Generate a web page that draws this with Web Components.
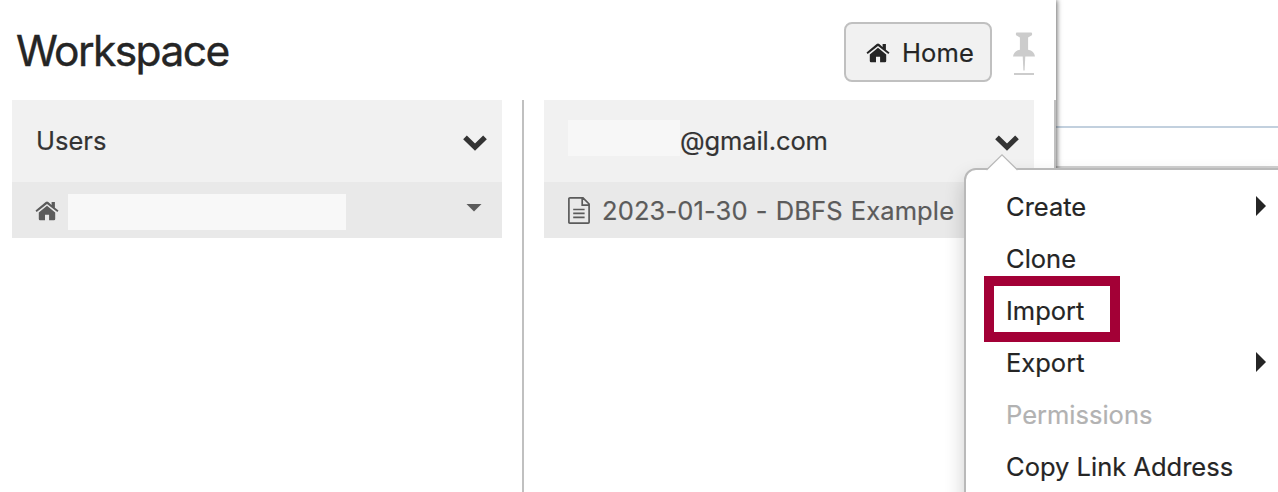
<!DOCTYPE html>
<html lang="en">
<head>
<meta charset="utf-8">
<title>Workspace</title>
<style>
html,body{margin:0;height:100%;overflow:hidden;background:#fff}
body{font-family:Inter,"Liberation Sans",sans-serif;font-size:25.5px;color:#252525;-webkit-text-stroke:.2px}
</style>
</head>
<body>
<workspace-app></workspace-app>
<script>
const define = (name, html) => customElements.define(name, class extends HTMLElement {
  constructor() {
    super();
    const t = document.createElement('template');
    t.innerHTML = html;
    this.attachShadow({mode: 'open'}).append(t.content.cloneNode(true));
  }
});

define('home-icon', `<style>:host{display:block;width:24px;height:20px;flex:none}svg{display:block}</style>
<svg width="24" height="20" viewBox="0 0 24 20" fill="currentColor"><path d="M12 4.8 20.2 11.500V18.100a1.2 1.2 0 0 1-1.2 1.2h-4.9v-5.6H10V19.300H5a1.2 1.2 0 0 1-1.2-1.2V11.500Z"/><path d="M.5 9.6 10.7 1.1q1.3-1 2.6 0l3.3 2.8V1h3.3v5.7l3.6 2.9-1.2 1.5L12 2.9 1.7 11.1Z"/></svg>`);

define('pin-icon', `<style>:host{display:block;width:24px;height:44px}svg{display:block}</style>
<svg width="24" height="44" viewBox="0 0 24 44" fill="#ccc"><path d="M5 0.6h14q1.2 0 1.2 1.4T19 3.8l-2.9 1.7v12.2q6.2 1.2 6.9 6.8H1q.7-5.6 6.9-6.8V5.500L5 3.800Q3.800 3.400 3.800 2T5 .6Z"/><path d="M10.700 24h2.600l-.7 14.500h-1.200Z"/><path d="M2 41h20v2H2z"/></svg>`);

define('chevron-icon', `<style>:host{display:block;width:24px;height:16px}svg{display:block}</style>
<svg width="24" height="16" viewBox="0 0 24 16"><path d="M2 2.300 12 12.200 22 2.300" fill="none" stroke="#333" stroke-width="5.200"/></svg>`);

define('file-icon', `<style>:host{display:block;width:22px;height:27px;flex:none}svg{display:block}</style>
<svg width="22" height="27" viewBox="0 0 22 27" fill="none" stroke="#5b5b5b" stroke-width="1.700"><path d="M2 .9H15L21.100 7V25.200Q21.100 26.100 20.200 26.100H1.800Q.9 26.100.9 25.200V1.800Q.9.9 2 .9ZM14.200 1V8.200H21M5.200 12.500H16.600M5.200 16.400H16.600M5.200 20.300H16.600"/></svg>`);

define('home-button', `<style>:host{box-sizing:border-box;width:148px;height:60px;border:2px solid #c0c0c0;border-radius:8px;background:#f1f1f1;display:flex;align-items:center;padding:0 0 0 20px;gap:12px;letter-spacing:.1px}
span{padding-top:1px}home-icon{margin-top:1px}</style>
<home-icon></home-icon><span><slot></slot></span>`);

define('workspace-header', `<style>:host{display:flex;height:100px;box-sizing:border-box;padding:22px 20px 0 16px;align-items:flex-start}
h1{margin:0;flex:1;font-size:42.5px;font-weight:400;line-height:58px;letter-spacing:-1.600px;-webkit-text-stroke:.4px}
pin-icon{margin:10px 0 0 20px}</style>
<h1><slot></slot></h1><home-button>Home</home-button><pin-icon></pin-icon>`);

define('column-header', `<style>:host{display:flex;align-items:center;height:82px;box-sizing:border-box;background:#f1f1f1;padding:0 15px 0 24px;color:#333}
span{flex:1;display:flex;align-items:center;line-height:36px}chevron-icon{margin-top:4px}</style>
<span><slot></slot></span><chevron-icon></chevron-icon>`);

define('column-row', `<style>:host{display:flex;align-items:center;height:56px;box-sizing:border-box;background:#e9e9e9;padding:2px 20px 0 24px;color:#5b5b5b;white-space:nowrap}
</style><slot></slot>`);

define('masked-text', `<style>:host{display:block;flex:none;height:36px;width:var(--w);background:var(--c)}</style>`);

define('row-caret', `<style>:host{display:block;margin:-7px 0 0 auto;width:16px;height:8px;background:#5b5b5b;clip-path:polygon(0 0,100% 0,50% 100%)}</style>`);

define('browser-column', `<style>:host{display:block;width:512px;height:392px;box-sizing:border-box;border-right:2px solid #c0c0c0;padding-right:20px;flex:none}</style><slot></slot>`);

define('menu-item', `<style>:host{display:flex;height:52px;align-items:center;justify-content:space-between;padding:0 10px 0 40px;white-space:nowrap}
:host([disabled]){color:#b2b2b2}i{display:none;width:10px;height:20px;background:#252525;clip-path:polygon(0 0,100% 50%,0 100%);margin-top:-2px}
span{padding-bottom:2px}:host([submenu]) i{display:block}</style><span><slot></slot></span><i></i>`);

define('context-menu', `<style>:host{position:absolute;left:964px;top:168px;width:320px;height:340px;box-sizing:border-box;border:2px solid #b9b9b9;border-radius:12px 0 0 0;background:#fff;padding:11px 6px 0 0;box-shadow:0 10px 20px rgba(0,0,0,.2)}
svg{position:absolute;left:20px;top:-16px}
.mark{position:absolute;left:18px;top:106px;width:136px;height:66px;box-sizing:border-box;border:10px solid #a30036}</style>
<svg width="32" height="18" viewBox="0 0 32 18"><path d="M.5 16 16 .9 31.500 16V18H.5Z" fill="#fff"/><path d="M.5 16 16 .9 31.500 16" fill="none" stroke="#b9b9b9" stroke-width="1.300"/></svg>
<slot></slot><div class="mark"></div>`);

define('workspace-panel', `<style>:host{display:block;width:1056px;height:492px;box-sizing:border-box;background:#fff;box-shadow:1px 0 5px rgba(0,0,0,.6);flex:none;position:relative}
.columns{display:flex;padding-left:12px;gap:20px;width:1044px}
home-icon{margin-right:9px;margin-left:-1px;margin-top:-1px}
file-icon{margin-top:-2px}
.mail{letter-spacing:-.1px}.file{letter-spacing:.12px;word-spacing:.8px;margin-left:12px;padding-bottom:2px}
.top{margin-top:-6px}.low{margin-top:2px}</style>
<workspace-header>Workspace</workspace-header>
<div class="columns">
<browser-column><column-header>Users</column-header><column-row><home-icon></home-icon><masked-text class="low" style="--w:278px;--c:#f8f8f8"></masked-text><row-caret></row-caret></column-row></browser-column>
<browser-column><column-header><masked-text class="top" style="--w:112px;--c:#f7f7f7"></masked-text><span class="mail">@gmail.com</span></column-header><column-row><file-icon></file-icon><span class="file">2023-01-30 - DBFS Example</span></column-row></browser-column>
</div>`);

define('page-backdrop', `<style>:host{display:block;flex:1;height:492px}
div{height:126px;border-bottom:2px solid #c2d0de}p{margin:0;height:38px;border-bottom:2px solid #d0d0d0}</style><div></div><p></p>`);

define('workspace-app', `<style>:host{display:flex;position:relative;width:1278px;height:492px;overflow:hidden}</style>
<workspace-panel></workspace-panel><page-backdrop></page-backdrop>
<context-menu>
<menu-item submenu>Create</menu-item>
<menu-item>Clone</menu-item>
<menu-item>Import</menu-item>
<menu-item submenu>Export</menu-item>
<menu-item disabled>Permissions</menu-item>
<menu-item>Copy Link Address</menu-item>
</context-menu>`);
</script>
</body>
</html>
